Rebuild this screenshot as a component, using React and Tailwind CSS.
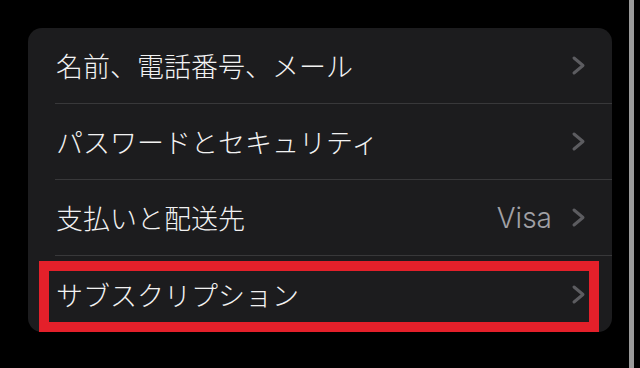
const Chevron = () => (
  <svg width="15" height="21" viewBox="0 0 15 21" className="shrink-0">
    <polyline
      points="3,3 12,10.5 3,18"
      fill="none"
      stroke="#5c5c60"
      strokeWidth="3"
      strokeLinecap="round"
      strokeLinejoin="round"
    />
  </svg>
);

const rows = [
  { label: "名前、電話番号、メール" },
  { label: "パスワードとセキュリティ" },
  { label: "支払いと配送先", value: "Visa" },
  { label: "サブスクリプション" },
];

const App = () => {
  return (
    <div className="flex h-[368px] w-[640px] overflow-hidden bg-black">
      <div className="pl-[28px] pt-[28px]">
        <div className="relative w-[584px] rounded-[14px] bg-[#1c1c1e]">
          {rows.map((row, i) => (
            <div key={row.label} className="pl-[27px]">
              <div
                className={
                  "flex h-[76px] items-center pl-px pr-[26px] " +
                  (i < rows.length - 1 ? "border-b border-[#38383a]" : "")
                }
              >
                <span
                  className="flex-1 pt-[2px] text-[27px] font-light text-[#f2f2f2]"
                  style={{ fontFamily: '"Noto Sans CJK JP", sans-serif' }}
                >
                  {row.label}
                </span>
                {row.value && (
                  <span className="mr-[19px] font-['Inter',sans-serif] text-[28px] font-light text-[#a0a0a5]">
                    {row.value}
                  </span>
                )}
                <Chevron />
              </div>
            </div>
          ))}
          <div className="absolute left-[11px] top-[233px] h-[71px] w-[560px] border-[10px] border-[#e4202a]" />
        </div>
      </div>
      <div className="ml-[17px] w-[5px] self-stretch bg-[#9a9a9a]" />
    </div>
  );
};

export default App;
